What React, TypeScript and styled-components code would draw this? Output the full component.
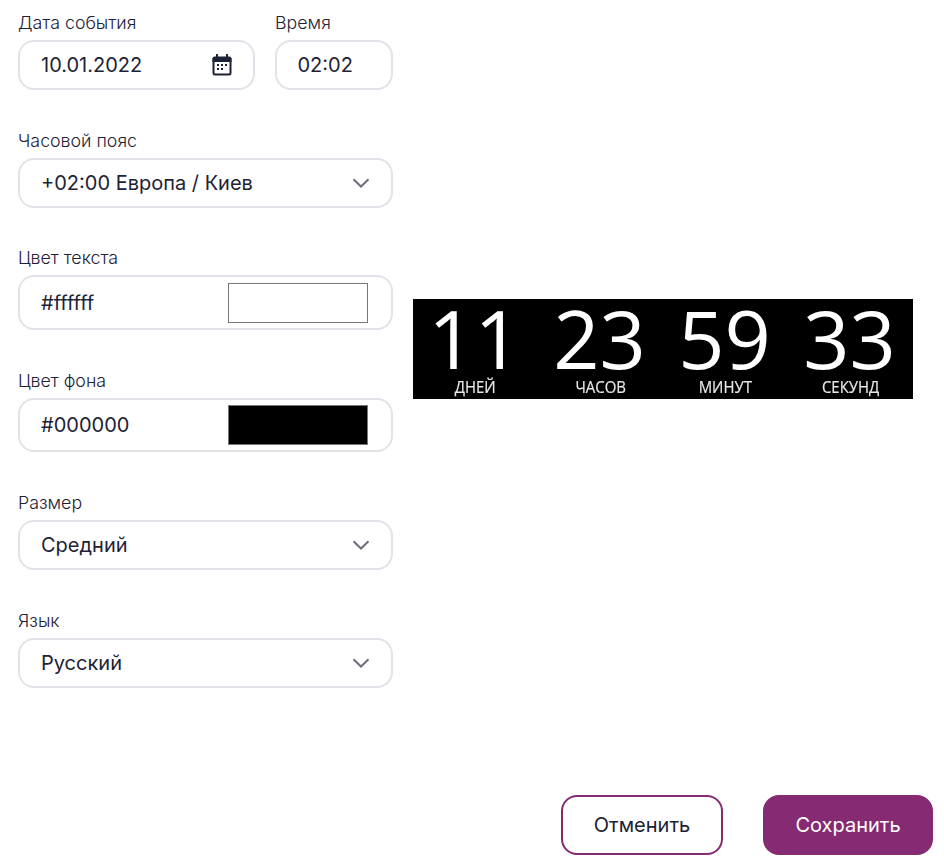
import React from 'react'
import styled, { createGlobalStyle } from 'styled-components'

const GlobalStyle = createGlobalStyle`
  html, body {
    margin: 0;
    padding: 0;
    background: #fff;
  }
  body {
    font-family: Inter, "Noto Sans", sans-serif;
    color: #1e2235;
  }
`

const Page = styled.div`
  width: 944px;
  height: 864px;
  display: flex;
  flex-direction: column;
  overflow: hidden;
`

const Content = styled.div`
  display: flex;
  padding-left: 18px;
  gap: 20px;
`

const Form = styled.div`
  width: 375px;
  height: 698px;
  display: flex;
  flex-direction: column;
  padding-top: 12px;
  box-sizing: border-box;
`

const Row = styled.div`
  display: flex;
  gap: 20px;
`

const Field = styled.div<{ $width?: number; $gap?: number }>`
  display: flex;
  flex-direction: column;
  width: ${({ $width }) => ($width ? `${$width}px` : '100%')};
  margin-bottom: ${({ $gap }) => $gap ?? 0}px;
`

const Label = styled.label`
  font-size: 17.8px;
  font-weight: 350;
  line-height: 21px;
  height: 28px;
  color: #1e2235;
`

const Control = styled.div<{ $height?: number; $narrow?: boolean }>`
  height: ${({ $height }) => $height ?? 50}px;
  box-sizing: border-box;
  border: 2px solid #e0e3e9;
  border-radius: 16px;
  padding: 0 21px 0 ${({ $narrow }) => ($narrow ? 20.5 : 21)}px;
  display: flex;
  align-items: center;
  justify-content: space-between;
  font-size: 20px;
  font-weight: 370;
  color: #1e2235;
`

const Swatch = styled.div<{ $color: string }>`
  width: 140px;
  height: 40px;
  box-sizing: border-box;
  border: 1px solid #767676;
  background: ${({ $color }) => $color};
  margin-right: 2px;
`

const Preview = styled.div`
  align-self: center;
  width: 500px;
  height: 100px;
  background: #000;
  display: grid;
  grid-template-columns: repeat(4, 125px);
  filter: blur(0.3px);
`

const Unit = styled.div`
  display: flex;
  flex-direction: column;
  align-items: center;
  color: #fff;
  font-family: "Open Sans", "Noto Sans", sans-serif;
`

const Digits = styled.div`
  font-size: 81px;
  line-height: 78px;
  height: 78px;
  transform: translateX(-1px);
`

const UnitName = styled.div`
  font-size: 17px;
  line-height: 20px;
  color: #e8e8e8;
  -webkit-text-stroke: 0.2px #e8e8e8;
  transform: scaleX(0.88);
`

const Footer = styled.div`
  display: flex;
  justify-content: flex-end;
  gap: 40px;
  padding: 97px 11px 0 0;
`

const Button = styled.button<{ $primary?: boolean }>`
  height: 60px;
  width: ${({ $primary }) => ($primary ? 170 : 162)}px;
  box-sizing: border-box;
  border-radius: 16px;
  border: 2px solid #862a73;
  background: ${({ $primary }) => ($primary ? '#862a73' : '#fff')};
  color: ${({ $primary }) => ($primary ? '#fff' : '#1e2235')};
  font-family: Inter, "Noto Sans", sans-serif;
  font-size: 20px;
  font-weight: 400;
  padding: 0;
`

const CalendarIcon = () => (
  <svg width="20" height="22" viewBox="0 0 20 22">
    <path
      fill="#1e2235"
      d="M4 0h2v2.500h8V0h2v2.500h1.200A2.300 2.300 0 0 1 19.500 4.800v14.400a2.300 2.300 0 0 1-2.300 2.300H2.800A2.300 2.300 0 0 1 .5 19.200V4.800a2.300 2.300 0 0 1 2.300-2.300H4zM2.500 8v11.200c0 .2.100.3.300.3h14.400c.2 0 .3-.1.300-.3V8z"
    />
    <path fill="#1e2235" d="M.5 4h19v4H.5z" />
    <path
      fill="#1e2235"
      d="M5 10h2v2H5zM9 10h2v2H9zM13 10h2v2h-2zM5 14h2v2H5zM9 14h2v2H9z"
    />
  </svg>
)

const Chevron = () => (
  <svg width="18" height="10" viewBox="0 0 18 10" fill="none">
    <path d="M1.500 1.200L9 8.500l7.500-7.300" stroke="#6d6f7c" strokeWidth="2" />
  </svg>
)

const units = [
  { value: '11', name: 'ДНЕЙ' },
  { value: '23', name: 'ЧАСОВ' },
  { value: '59', name: 'МИНУТ' },
  { value: '33', name: 'СЕКУНД' },
]

export default function App() {
  return (
    <Page>
      <GlobalStyle />
      <Content>
        <Form>
          <Row>
            <Field $width={237} $gap={40}>
              <Label>Дата события</Label>
              <Control>
                10.01.2022
                <CalendarIcon />
              </Control>
            </Field>
            <Field $width={118}>
              <Label>Время</Label>
              <Control $narrow>02:02</Control>
            </Field>
          </Row>
          <Field $gap={39}>
            <Label>Часовой пояс</Label>
            <Control>
              +02:00 Европа / Киев
              <Chevron />
            </Control>
          </Field>
          <Field $gap={40}>
            <Label>Цвет текста</Label>
            <Control $height={55}>
              #ffffff
              <Swatch $color="#ffffff" />
            </Control>
          </Field>
          <Field $gap={40}>
            <Label>Цвет фона</Label>
            <Control $height={54}>
              #000000
              <Swatch $color="#000000" />
            </Control>
          </Field>
          <Field $gap={40}>
            <Label>Размер</Label>
            <Control>
              Средний
              <Chevron />
            </Control>
          </Field>
          <Field>
            <Label>Язык</Label>
            <Control>
              Русский
              <Chevron />
            </Control>
          </Field>
        </Form>
        <Preview>
          {units.map(unit => (
            <Unit key={unit.name}>
              <Digits>{unit.value}</Digits>
              <UnitName>{unit.name}</UnitName>
            </Unit>
          ))}
        </Preview>
      </Content>
      <Footer>
        <Button>Отменить</Button>
        <Button $primary>Сохранить</Button>
      </Footer>
    </Page>
  )
}
